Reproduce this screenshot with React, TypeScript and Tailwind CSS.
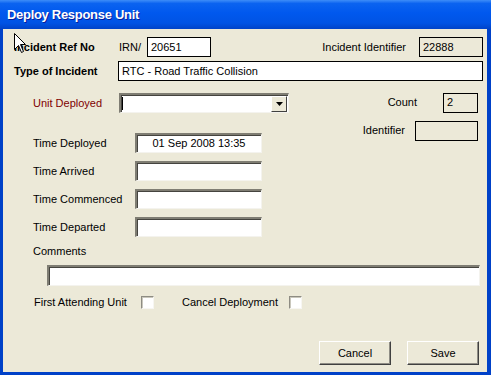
import React from 'react';

const font = "font-['Liberation_Sans',Arial,sans-serif]";

const sunken =
    'bg-white border-t-2 border-l-2 border-b border-r border-t-[#7f7d73] border-l-[#7f7d73] border-b-[#f4f3ee] border-r-[#f4f3ee] shadow-[inset_1px_1px_0_#45443f]';

const flatBox = 'border border-black h-[20px] flex items-center px-[3px] text-[11px]';

const Label = ({children, className = ''}: {children: React.ReactNode; className?: string}) => (
    <div className={`text-[11px] leading-none whitespace-nowrap ${className}`}>{children}</div>
);

const TimeRow = ({label, value, className = ''}: {label: string; value?: string; className?: string}) => (
    <div className={`flex items-center h-[20px] ${className}`}>
        <Label className="w-[102px]">{label}</Label>
        <div className={`${sunken} w-[127px] h-[20px] flex items-center justify-center text-[11px]`}>{value}</div>
    </div>
);

const CheckBox = () => (
    <div className="w-[13px] h-[13px] bg-white border border-t-[#8e8c83] border-l-[#8e8c83] border-b-[#f7f6f2] border-r-[#f7f6f2] shadow-[inset_1px_1px_0_#c9c7bc]"/>
);

const XpButton = ({children}: {children: React.ReactNode}) => (
    <button
        type="button"
        className="w-[72px] h-[24px] bg-[#ece9d8] text-[11px] text-black border border-t-white border-l-white border-b-[#404040] border-r-[#404040] shadow-[inset_-1px_-1px_0_#8f8d85]"
    >
        {children}
    </button>
);

const Cursor = () => (
    <svg className="absolute left-[14px] top-[33px]" width="13" height="21" viewBox="0 0 13 21">
        <path d="M0.5 0.5 L0.5 16.5 L4.5 12.5 L7.5 19.5 L9.5 18.5 L6.5 11.5 L11.5 11.5 Z" fill="white" stroke="black" strokeWidth="1"/>
    </svg>
);

export default function App() {
    return (
        <div className={`${font} relative w-[491px] h-[375px] overflow-hidden bg-[#0041c8] text-black flex flex-col`}>
            {/* title bar */}
            <div className="h-[29px] shrink-0 flex items-center pl-[7px] bg-[linear-gradient(to_bottom,#3e8df8_0%,#0b63f0_12%,#0058ee_45%,#0053e4_80%,#0043c8_100%)]">
                <span className="text-white font-bold text-[13px] tracking-[-0.3px] [text-shadow:1px_1px_0_#0a1e9a]">Deploy Response Unit</span>
            </div>

            {/* body */}
            <div className="flex-1 ml-[3px] mr-[4px] mb-[3px] bg-[#ece9d8] flex flex-col pl-[11px] pt-[8px]">
                {/* incident ref */}
                <div className="flex items-center h-[20px]">
                    <Label className="w-[105px] font-bold">Incident Ref No</Label>
                    <Label className="w-[28px]">IRN/</Label>
                    <div className={`${flatBox} w-[64px] bg-white`}>20651</div>
                    <Label className="ml-auto mr-[13px]">Incident Identifier</Label>
                    <div className={`${flatBox} w-[64px] h-[19px] mr-[4px]`}>22888</div>
                </div>

                {/* type of incident */}
                <div className="flex items-center h-[20px] mt-[4px]">
                    <Label className="w-[104px] font-bold">Type of Incident</Label>
                    <div className={`${flatBox} flex-1 bg-white mr-[4px]`}>RTC - Road Traffic Collision</div>
                </div>

                {/* unit + times / count + identifier */}
                <div className="flex mt-[12px] pl-[19px]">
                    <div className="flex flex-col">
                        <div className="flex items-center h-[20px]">
                            <Label className="w-[86px] text-[#800000]">Unit Deployed</Label>
                            <div className={`${sunken} w-[170px] h-[20px] flex items-center`}>
                                <div className="w-px h-[13px] bg-black ml-[1px]"/>
                                <div className="ml-auto mr-[1px] w-[16px] h-[16px] bg-[#ece9d8] border border-t-white border-l-white border-b-[#404040] border-r-[#404040] flex items-center justify-center">
                                    <svg width="7" height="4" viewBox="0 0 7 4"><path d="M0 0 H7 L3.5 4 Z" fill="black"/></svg>
                                </div>
                            </div>
                        </div>
                        <TimeRow label="Time Deployed" value="01 Sep 2008 13:35" className="mt-[20px]"/>
                        <TimeRow label="Time Arrived" className="mt-[8px]"/>
                        <TimeRow label="Time Commenced" className="mt-[8px]"/>
                        <TimeRow label="Time Departed" className="mt-[8px]"/>
                    </div>
                    <div className="flex flex-col items-end ml-auto mr-[9px]">
                        <div className="flex items-center h-[19px]">
                            <Label className="mr-[26px]">Count</Label>
                            <div className={`${flatBox} w-[35px] h-[19px]`}>2</div>
                        </div>
                        <div className="flex items-center h-[19px] mt-[9px]">
                            <Label className="mr-[10px]">Identifier</Label>
                            <div className={`${flatBox} w-[63px] h-[19px]`}/>
                        </div>
                    </div>
                </div>

                {/* comments */}
                <Label className="mt-[7px] pl-[19px] h-[14px] flex items-center">Comments</Label>
                <div className={`${sunken} h-[21px] ml-[33px] mr-[7px] mt-[7px]`}/>

                {/* check boxes */}
                <div className="flex items-center h-[13px] mt-[10px] pl-[20px]">
                    <Label className="w-[107px]">First Attending Unit</Label>
                    <CheckBox/>
                    <Label className="ml-[28px] w-[107px]">Cancel Deployment</Label>
                    <CheckBox/>
                </div>

                {/* buttons */}
                <div className="flex justify-end gap-[16px] mt-[32px] mr-[8px]">
                    <XpButton>Cancel</XpButton>
                    <XpButton>Save</XpButton>
                </div>
            </div>

            <Cursor/>
        </div>
    );
}
